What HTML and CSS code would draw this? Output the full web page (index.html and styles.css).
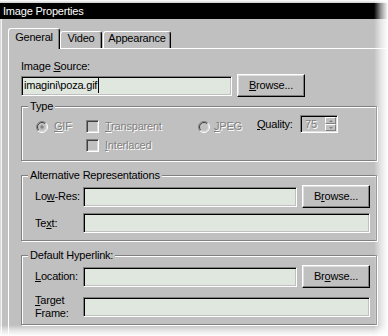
FILE: index.html
```html
<!DOCTYPE html>
<html>
<head>
<meta charset="utf-8">
<title>Image Properties</title>
<link rel="stylesheet" href="styles.css">
</head>
<body>
<div class="window">
  <div class="titlebar"><span class="title">Image Properties</span></div>
  <div class="client">
    <div class="tabs">
      <div class="tab tab-active tab-general">General</div>
      <div class="tab tab-video">Video</div>
      <div class="tab tab-appearance">Appearance</div>
    </div>
    <div class="panel">
      <div class="field-label">Image <u>S</u>ource:</div>
      <div class="source-row">
        <div class="input source-input">imagini\poza.gif<span class="caret"></span></div>
        <button class="btn"><u>B</u>rowse...</button>
      </div>

      <fieldset class="group type-group">
        <legend>Type</legend>
        <div class="type-grid">
          <div class="opt disabled">
            <svg class="radio" width="12" height="12" viewBox="0 0 12 12">
              <path d="M2.1 9.9A5.5 5.5 0 0 1 9.9 2.1" fill="none" stroke="#808080"/>
              <path d="M9.9 2.1A5.5 5.5 0 0 1 2.1 9.9" fill="none" stroke="#fff"/>
              <circle cx="6" cy="6" r="4" fill="#c0c0c0"/>
              <path d="M2.8 9.2A4.5 4.5 0 0 1 9.2 2.8" fill="none" stroke="#404040"/>
              <path d="M9.2 2.8A4.5 4.5 0 0 1 2.8 9.2" fill="none" stroke="#dfdfdf"/>
              <circle cx="6" cy="6" r="1.7" fill="#808080"/>
            </svg>
            <span class="dis-text"><u>G</u>IF</span>
          </div>
          <div class="opt disabled">
            <span class="check"></span>
            <span class="dis-text"><u>T</u>ransparent</span>
          </div>
          <div class="opt opt-jpeg disabled">
            <svg class="radio" width="12" height="12" viewBox="0 0 12 12">
              <path d="M2.1 9.9A5.5 5.5 0 0 1 9.9 2.1" fill="none" stroke="#808080"/>
              <path d="M9.9 2.1A5.5 5.5 0 0 1 2.1 9.9" fill="none" stroke="#fff"/>
              <circle cx="6" cy="6" r="4" fill="#c0c0c0"/>
              <path d="M2.8 9.2A4.5 4.5 0 0 1 9.2 2.8" fill="none" stroke="#404040"/>
              <path d="M9.2 2.8A4.5 4.5 0 0 1 2.8 9.2" fill="none" stroke="#dfdfdf"/>
            </svg>
            <span class="dis-text"><u>J</u>PEG</span>
          </div>
          <div class="quality">
            <span><u>Q</u>uality:</span>
            <div class="spinner">
              <span class="dis-text">75</span>
              <div class="spin-btns"><span class="spin-up"></span><span class="spin-down"></span></div>
            </div>
          </div>
          <div class="opt disabled row2">
            <span class="check"></span>
            <span class="dis-text"><u>I</u>nterlaced</span>
          </div>
        </div>
      </fieldset>

      <fieldset class="group alt-group">
        <legend>Alternative Representations</legend>
        <div class="form-grid">
          <span class="label">Lo<u>w</u>-Res:</span>
          <div class="input"></div>
          <button class="btn">B<u>r</u>owse...</button>
          <span class="label">Te<u>x</u>t:</span>
          <div class="input span2"></div>
        </div>
      </fieldset>

      <fieldset class="group link-group">
        <legend>Default Hyperlink:</legend>
        <div class="form-grid link-grid">
          <span class="label"><u>L</u>ocation:</span>
          <div class="input"></div>
          <button class="btn">Br<u>o</u>wse...</button>
          <span class="label"><u>T</u>arget<br>Frame:</span>
          <div class="input span2"></div>
        </div>
      </fieldset>
    </div>
  </div>
  <div class="fade-top"></div>
  <div class="fade-right"></div>
  <div class="fade-bottom"></div>
</div>
</body>
</html>
```
FILE: styles.css
```css
* { box-sizing: border-box; }
html, body { margin: 0; padding: 0; background: #fff; }
body {
  font-family: "Liberation Sans", Arial, sans-serif;
  font-size: 11px;
  line-height: 13px;
  letter-spacing: -0.2px;
  color: #000;
}
u { text-decoration: underline; text-underline-offset: 1px; }

.window {
  position: relative;
  width: 388px;
  height: 336px;
  overflow: hidden;
  background: #c0c0c0;
  padding-top: 3px;
  display: flex;
  flex-direction: column;
}
.titlebar {
  height: 16px;
  background: #000;
  color: #fff;
  padding-left: 3px;
  display: flex;
  align-items: center;
  flex: none;
}
.client {
  flex: 1;
  display: flex;
  flex-direction: column;
  padding-top: 9px;
  background: linear-gradient(to right, #d8d8d8 0, #d8d8d8 1px, #f4f4f4 1px, #f4f4f4 2px, #c0c0c0 2px);
}

/* tabs */
.tabs {
  display: flex;
  align-items: flex-end;
  height: 20px;
  margin-left: 8px;
}
.tab {
  height: 17px;
  border: 1px solid #fff;
  border-bottom: 0;
  border-right-color: #000;
  box-shadow: inset -1px 0 0 #808080;
  border-radius: 3px 3px 0 0;
  text-align: center;
  background: #c0c0c0;
}
.tab-active {
  height: 21px;
  margin-bottom: -1px;
  padding-top: 2px;
  position: relative;
  z-index: 1;
}
.tab-general { width: 52px; }
.tab-video { width: 42px; }
.tab-appearance { width: 68px; margin-left: 1px; }

.panel {
  flex: 1;
  width: 400px;
  margin-left: 8px;
  border-top: 1px solid #fff;
  border-left: 1px solid #fff;
  padding: 11px 0 0 12px;
}
.field-label { height: 13px; }
.source-row {
  display: flex;
  align-items: center;
  gap: 5px;
  margin-top: 1px;
  height: 23px;
}
.source-input { width: 211px; }
.caret {
  display: inline-block;
  width: 1px;
  height: 15px;
  background: #000;
  margin-left: 1px;
}

/* controls */
.input {
  height: 20px;
  background: #dfe7df;
  border: 1px solid;
  border-color: #808080 #fff #fff #808080;
  box-shadow: inset 1px 1px 0 #000, inset -1px -1px 0 #c0c0c0;
  padding: 0 2px 0 2px;
  display: flex;
  align-items: center;
  white-space: nowrap;
  overflow: hidden;
}
.btn {
  width: 68px;
  height: 23px;
  font: inherit;
  letter-spacing: inherit;
  color: #000;
  background: #c0c0c0;
  border: 1px solid;
  border-color: #fff #000 #000 #fff;
  box-shadow: inset -1px -1px 0 #808080, inset 1px 1px 0 #dfdfdf;
  padding: 0;
  flex: none;
}
.dis-text { color: #808080; text-shadow: 1px 1px 0 #fff; white-space: nowrap; }
.check {
  width: 13px;
  height: 13px;
  flex: none;
  border: 1px solid;
  border-color: #808080 #fff #fff #808080;
  box-shadow: inset 1px 1px 0 #404040, inset -1px -1px 0 #dfdfdf;
  background: #c0c0c0;
}
.radio { flex: none; display: block; }

/* group boxes */
.group {
  margin: 8px 0 0 0;
  padding: 0;
  width: 356px;
  min-width: 0;
  border: 1px solid #808080;
  box-shadow: inset 1px 1px 0 #fff, 1px 1px 0 #fff;
}
.type-group { margin-top: 3px; }
.group legend {
  margin-left: 6px;
  padding: 0 2px;
  line-height: 13px;
  background: #c0c0c0;
}

.type-grid {
  display: grid;
  grid-template-columns: 50px 112px 59px 81px;
  align-items: end;
  row-gap: 6px;
  padding: 2px 0 8px 14px;
}
.opt {
  display: flex;
  align-items: center;
  gap: 6px;
  height: 13px;
}
.opt-jpeg { gap: 4px; }
.row2 { grid-column: 2; }
.quality {
  display: flex;
  align-items: center;
  justify-content: space-between;
  height: 18px;
}
.spinner {
  width: 38px;
  height: 18px;
  border: 1px solid;
  border-color: #808080 #fff #fff #808080;
  box-shadow: inset 1px 1px 0 #000, inset -1px -1px 0 #dfdfdf;
  background: #c0c0c0;
  display: flex;
  align-items: center;
  justify-content: space-between;
  padding: 2px 1px 2px 4px;
}
.spin-btns {
  width: 11px;
  height: 14px;
  display: flex;
  flex-direction: column;
}
.spin-btns span {
  flex: 1;
  border: 1px solid;
  border-color: #fff #808080 #808080 #fff;
  display: flex;
  align-items: center;
  justify-content: center;
}
.spin-up::after {
  content: "";
  border-left: 2px solid transparent;
  border-right: 2px solid transparent;
  border-bottom: 2px solid #808080;
}
.spin-down::after {
  content: "";
  border-left: 2px solid transparent;
  border-right: 2px solid transparent;
  border-top: 2px solid #808080;
}

.form-grid {
  display: grid;
  grid-template-columns: 43px 214px 68px;
  column-gap: 5px;
  row-gap: 5px;
  align-items: center;
  padding: 3px 0 7px 13px;
}
.label { white-space: nowrap; }
.link-grid { row-gap: 6px; padding-bottom: 4px; }
.span2 { grid-column: 2 / 4; }

/* soft photo edges */
.fade-top {
  position: absolute;
  left: 0; right: 0; top: 0;
  height: 3px;
  background: linear-gradient(to bottom, #fff, rgba(255,255,255,0.2));
}
.fade-right {
  position: absolute;
  top: 0; bottom: 0; right: 0;
  width: 14px;
  background: linear-gradient(to right, rgba(255,255,255,0), rgba(255,255,255,0.6) 50%, #fff);
}
.fade-bottom {
  position: absolute;
  left: 0; right: 0; bottom: 0;
  height: 11px;
  background: linear-gradient(to bottom, rgba(255,255,255,0), rgba(255,255,255,0.6) 50%, #fff);
}
```
